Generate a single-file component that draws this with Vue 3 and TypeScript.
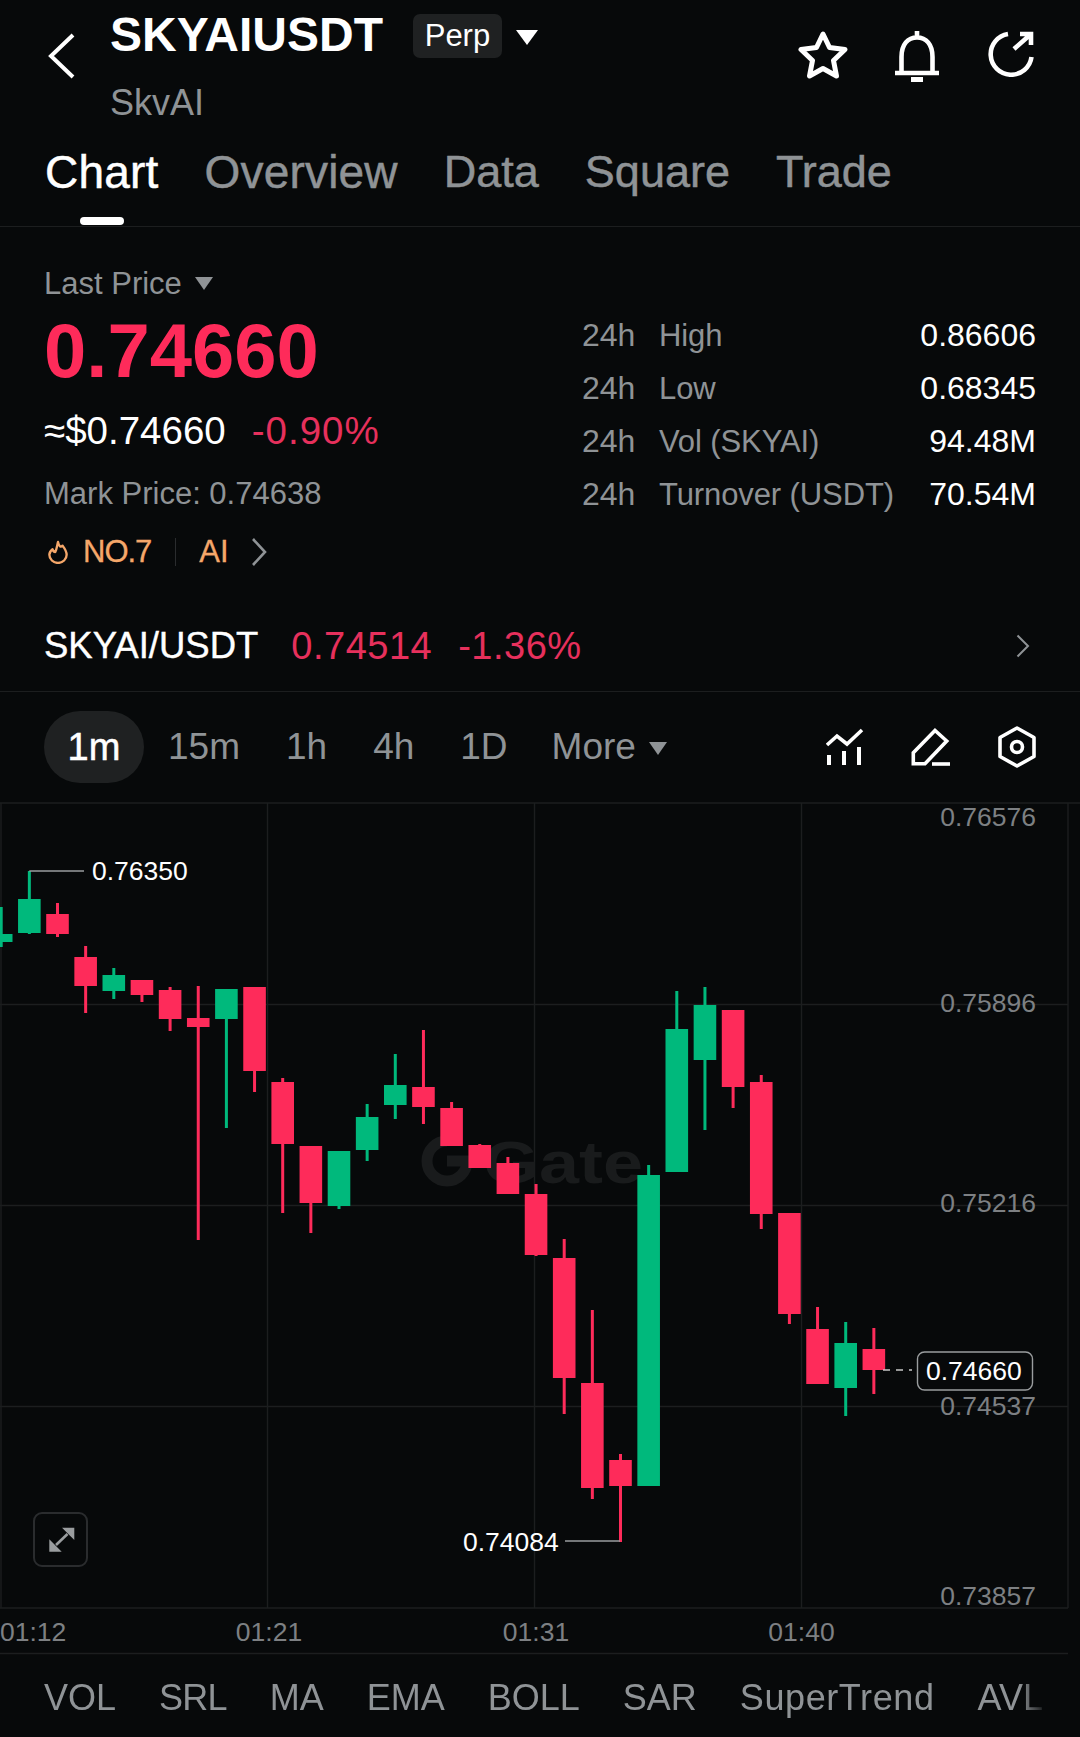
<template>
  <div class="page">
    <header class="top">
      <svg class="back" width="30" height="48" viewBox="0 0 30 48">
        <path d="M26 3 L4 24 L26 45" fill="none" stroke="#fff" stroke-width="4" />
      </svg>
      <div class="title-block">
        <div class="title-row">
          <span class="symbol">SKYAIUSDT</span>
          <span class="perp">Perp</span>
          <span class="tri tri-white"></span>
        </div>
        <div class="subname">SkvAI</div>
      </div>
      <div class="top-icons">
        <svg width="50" height="48" viewBox="0 0 50 48">
          <path d="M25 3 L31.5 16.5 L47 18.5 L35.5 29.5 L38.5 45 L25 37.5 L11.5 45 L14.5 29.5 L3 18.5 L18.5 16.5 Z" fill="none" stroke="#fff" stroke-width="5" stroke-linejoin="round" />
        </svg>
        <svg width="44" height="52" viewBox="0 0 44 52">
          <path d="M22 0 V6 M6.5 41 V26 C6.5 13 13 6.5 22 6.5 C31 6.5 37.5 13 37.5 26 V41 M0 42 H44" fill="none" stroke="#fff" stroke-width="4.6" />
          <rect x="16" y="46" width="12" height="5" fill="#fff" />
        </svg>
        <svg class="refresh" width="46" height="46" viewBox="0 0 46 46">
          <path d="M20 3 A20.5 20.5 0 1 0 43.5 26" fill="none" stroke="#fff" stroke-width="4.6" />
          <path d="M26 18 L43 3 M32 3 H43 V14" fill="none" stroke="#fff" stroke-width="4.6" />
        </svg>
      </div>
    </header>

    <nav class="tabs">
      <span v-for="(t, i) in tabs" :key="t" class="tab" :class="{ active: i === 0 }">{{ t }}</span>
      <i class="tab-bar"></i>
    </nav>

    <section class="info">
      <div class="info-left">
        <div class="last-label">Last Price<span class="tri tri-grey"></span></div>
        <div class="price">0.74660</div>
        <div class="price-sub">
          <span class="usd">≈$0.74660</span>
          <span class="pct">-0.90%</span>
        </div>
        <div class="mark">Mark Price: 0.74638</div>
        <div class="rank">
          <svg width="20" height="24" viewBox="0 0 22 26">
            <path d="M11 2 C12 7 14 8 16 6 C19 10 20.5 13 20.5 16 A9.5 9 0 0 1 1.5 16 C1.5 13.5 3 11.5 5 10 C5.5 12 6.5 13 8 13 C9.5 10 10 6 11 2 Z" fill="none" stroke="#f5a76a" stroke-width="2.6" stroke-linejoin="round" />
          </svg>
          <span class="rank-no">NO.7</span>
          <i class="rank-div"></i>
          <span class="rank-tag">AI</span>
          <svg class="rank-arrow" width="16" height="30" viewBox="0 0 16 30">
            <path d="M2 2 L14 15 L2 28" fill="none" stroke="#8f9396" stroke-width="2.6" />
          </svg>
        </div>
      </div>
      <div class="stats">
        <div v-for="s in stats" :key="s.label" class="stat-row">
          <span class="stat-h">24h</span>
          <span class="stat-label">{{ s.label }}</span>
          <span class="stat-value">{{ s.value }}</span>
        </div>
      </div>
    </section>

    <section class="spot">
      <span class="spot-name">SKYAI/USDT</span>
      <span class="spot-num">0.74514</span>
      <span class="spot-num spot-pct">-1.36%</span>
      <svg class="spot-arrow" width="14" height="24" viewBox="0 0 14 24">
        <path d="M1.5 1.5 L12 12 L1.5 22.5" fill="none" stroke="#8f9396" stroke-width="2" />
      </svg>
    </section>

    <section class="periods">
      <span class="pill">1m</span>
      <span class="period p15">15m</span>
      <span class="period">1h</span>
      <span class="period">4h</span>
      <span class="period p1d">1D</span>
      <span class="period more">More<span class="tri tri-grey"></span></span>
      <div class="tool-icons">
        <svg width="38" height="38" viewBox="0 0 38 38">
          <path d="M1 17 L11 8 L21 16 L36 2" fill="none" stroke="#fff" stroke-width="3.6" />
          <path d="M3 27 V37 M18 23 V37 M33 19 V37" fill="none" stroke="#fff" stroke-width="4" />
        </svg>
        <svg width="40" height="38" viewBox="0 0 40 38">
          <path d="M2.3 35.7 V24.7 L24 2.5 L35.7 13 L14 35.7 Z" fill="none" stroke="#fff" stroke-width="3.6" />
          <path d="M21 36 H39" fill="none" stroke="#fff" stroke-width="3.6" />
        </svg>
        <svg width="38" height="42" viewBox="0 0 38 42">
          <path d="M19 2 L36 11.5 V30.5 L19 40 L2 30.5 V11.5 Z" fill="none" stroke="#fff" stroke-width="3.6" stroke-linejoin="round" />
          <circle cx="19" cy="21" r="5.5" fill="none" stroke="#fff" stroke-width="3.6" />
        </svg>
      </div>
    </section>

    <section class="chart">
      <svg class="plot" width="1080" height="852" viewBox="0 802 1080 852">
        <g stroke="#1c1e1f" stroke-width="1.4">
          <line x1="0" y1="803" x2="1080" y2="803" />
          <line x1="0" y1="1004.5" x2="1068" y2="1004.5" />
          <line x1="0" y1="1205.5" x2="1068" y2="1205.5" />
          <line x1="0" y1="1406.5" x2="1068" y2="1406.5" />
          <line x1="0" y1="1608" x2="1068" y2="1608" />
          <line x1="0" y1="1653.5" x2="1068" y2="1653.5" />
          <line v-for="x in gridX" :key="x" :x1="x" y1="803" :x2="x" y2="1608" />
        </g>
        <g class="wm">
          <path d="M447 1141 A20 20 0 1 0 467 1161 H447" fill="none" stroke="#191b1c" stroke-width="11" />
          <text x="483" y="1183" textLength="160" lengthAdjust="spacingAndGlyphs">Gate</text>
        </g>
        <g v-for="c in candles" :key="c.x" :fill="c.color">
          <rect :x="c.x - 1.5" :y="c.wt" width="3" :height="c.wb - c.wt" />
          <rect :x="c.x - 11.3" :y="c.t" width="22.6" :height="c.b - c.t" />
        </g>
        <path d="M29.3 871 H84" fill="none" stroke="#9a9d9f" stroke-width="1.4" />
        <text class="plot-white" x="92" y="880">0.76350</text>
        <path d="M565 1541 H620" fill="none" stroke="#9a9d9f" stroke-width="1.4" />
        <text class="plot-white" x="463" y="1551">0.74084</text>
        <text v-for="l in axisY" :key="l.v" class="plot-grey" x="1036" text-anchor="end" :y="l.y">{{ l.v }}</text>
        <path d="M883 1370 H912" fill="none" stroke="#c8c8c8" stroke-width="1.4" stroke-dasharray="7 6" />
        <rect x="917.5" y="1352" width="115" height="38" rx="7" fill="#07090a" stroke="#9a9d9f" stroke-width="1.4" />
        <text class="plot-white" x="926" y="1380">0.74660</text>
        <text class="plot-grey" x="0" y="1640.5">01:12</text>
        <text v-for="t in times" :key="t.v" class="plot-grey" text-anchor="middle" :x="t.x" y="1640.5">{{ t.v }}</text>
      </svg>
      <button class="expand">
        <svg width="30" height="30" viewBox="20 20 30 30">
          <path d="M36 22.7 H48.3 V35 Z M23.3 34.3 V46.7 H35.7 Z" fill="#9a9d9f" />
          <path d="M41.5 29 L30 40" fill="none" stroke="#9a9d9f" stroke-width="2.6" />
        </svg>
      </button>
    </section>

    <div class="indicators">
      <span v-for="n in indicators" :key="n">{{ n }}</span>
    </div>
  </div>
</template>

<script setup lang="ts">
const tabs = ['Chart', 'Overview', 'Data', 'Square', 'Trade']

const stats = [
  { label: 'High', value: '0.86606' },
  { label: 'Low', value: '0.68345' },
  { label: 'Vol (SKYAI)', value: '94.48M' },
  { label: 'Turnover (USDT)', value: '70.54M' },
]

const indicators = ['VOL', 'SRL', 'MA', 'EMA', 'BOLL', 'SAR', 'SuperTrend', 'AVL']
const gridX = [1, 267.5, 534.5, 801.5, 1068]

const axisY = [
  { v: '0.76576', y: 825.5 },
  { v: '0.75896', y: 1011.5 },
  { v: '0.75216', y: 1211.5 },
  { v: '0.74537', y: 1414.5 },
  { v: '0.73857', y: 1604.5 },
]

const times = [
  { v: '01:21', x: 269 },
  { v: '01:31', x: 536 },
  { v: '01:40', x: 801.5 },
]

const UP = '#00b97c'
const DOWN = '#fe2b5a'

// body top, body bottom, wick top, wick bottom, green?
const raw: [number, number, number, number, boolean][] = [
  [934, 942, 907, 947, true],
  [899, 933, 871, 934, true],
  [914, 934, 903, 937, false],
  [957, 986, 946, 1013, false],
  [975, 991, 968, 999, true],
  [980, 995, 980, 1002, false],
  [990, 1019, 987, 1031, false],
  [1018, 1027, 986, 1240, false],
  [989, 1019, 989, 1128, true],
  [987, 1071, 987, 1092, false],
  [1082, 1144, 1078, 1213, false],
  [1146, 1203, 1146, 1233, false],
  [1151, 1206, 1151, 1209, true],
  [1117, 1150, 1104, 1161, true],
  [1085, 1105, 1054, 1119, true],
  [1087, 1107, 1030, 1124, false],
  [1108, 1146, 1102, 1146, false],
  [1145, 1168, 1144, 1168, false],
  [1163, 1194, 1157, 1194, false],
  [1194, 1255, 1184, 1256, false],
  [1258, 1378, 1239, 1414, false],
  [1383, 1488, 1310, 1499, false],
  [1460, 1486, 1454, 1542, false],
  [1175, 1486, 1165, 1486, true],
  [1029, 1172, 991, 1172, true],
  [1005, 1060, 987, 1130, true],
  [1010, 1087, 1010, 1108, false],
  [1082, 1214, 1075, 1229, false],
  [1213, 1314, 1213, 1324, false],
  [1329, 1384, 1307, 1384, false],
  [1343, 1388, 1322, 1416, true],
  [1349, 1370, 1328, 1394, false],
]

const candles = raw.map((c, i) => ({
  x: 1.2 + 28.15 * i,
  t: c[0],
  b: c[1],
  wt: c[2],
  wb: c[3],
  color: c[4] ? UP : DOWN,
}))
</script>

<style>
html,
body {
  background: #07090a;
}
</style>

<style scoped>
.page {
  width: 1080px;
  height: 1737px;
  overflow: hidden;
  background: #07090a;
  color: #fff;
  font-family: "Liberation Sans", Arial, sans-serif;
}
.top {
  height: 128px;
  display: flex;
  padding: 0 46px 0 47px;
  position: relative;
}
.back {
  margin-top: 32px;
  margin-right: 33px;
  flex: none;
}
.title-row {
  display: flex;
  align-items: center;
  height: 69px;
}
.symbol {
  font-size: 48px;
  font-weight: 700;
}
.perp {
  margin-left: 30px;
  margin-top: 3px;
  width: 89px;
  height: 44px;
  border-radius: 7px;
  background: #1f2122;
  font-size: 31px;
  line-height: 43px;
  text-align: center;
}
.tri {
  display: inline-block;
  width: 0;
  height: 0;
  border-style: solid;
  border-color: transparent;
  border-bottom-width: 0;
}
.tri-white {
  margin-left: 14px;
  margin-top: 6px;
  border-width: 15px 11.5px 0;
  border-top-color: #fff;
}
.tri-grey {
  margin-left: 13px;
  vertical-align: 4px;
  border-width: 13px 9.5px 0;
  border-top-color: #8f9396;
}
.subname {
  font-size: 36px;
  color: #8f9396;
  margin-top: 12px;
  line-height: 44px;
}
.top-icons {
  margin-left: auto;
  padding-top: 31px;
  display: flex;
  align-items: flex-start;
  gap: 47px;
}
.refresh {
  margin-left: 2px;
}
.tabs {
  position: relative;
  height: 99px;
  display: flex;
  gap: 46px;
  padding-left: 45px;
  border-bottom: 1px solid #1c1e1f;
  box-sizing: border-box;
}
.tab {
  font-size: 46px;
  line-height: 88px;
  height: 88px;
  color: #8f9396;
  letter-spacing: 0.2px;
  -webkit-text-stroke: 0.5px currentColor;
}
.tab:nth-child(n + 3) {
  font-size: 45px;
  letter-spacing: 0;
}
.tab.active {
  color: #fff;
}
.tab-bar {
  position: absolute;
  left: 80px;
  bottom: 1px;
  width: 44px;
  height: 8px;
  border-radius: 4px;
  background: #fff;
}
.info {
  height: 350px;
  display: flex;
  justify-content: space-between;
  padding: 0 44px;
}
.last-label {
  margin-top: 35px;
  font-size: 31px;
  line-height: 44px;
  color: #8f9396;
}
.price {
  font-size: 76px;
  font-weight: 700;
  line-height: 80px;
  color: #fe2b5a;
  margin-top: 5px;
}
.price-sub {
  display: flex;
  gap: 26px;
  margin-top: 14px;
  font-size: 38.5px;
  line-height: 52px;
}
.pct {
  color: #e6305c;
  letter-spacing: 1px;
}
.mark {
  margin-top: 11px;
  font-size: 31px;
  line-height: 52px;
  color: #8f9396;
}
.rank {
  margin-top: 6px;
  display: flex;
  align-items: center;
  height: 52px;
  font-size: 31px;
  color: #f5a76a;
  padding-left: 4px;
  -webkit-text-stroke: 0.3px currentColor;
}
.rank-no {
  margin-left: 15px;
  letter-spacing: -1px;
}
.rank-div {
  width: 1px;
  height: 28px;
  margin: 0 23px 0 24px;
  background: #2a2c2e;
}
.rank-arrow {
  margin-left: 22px;
}
.stats {
  width: 454px;
  padding-top: 82px;
}
.stat-row {
  display: flex;
  align-items: center;
  height: 53px;
  font-size: 32px;
  color: #8f9396;
}
.stat-h {
  width: 77px;
}
.stat-label {
  font-size: 31px;
  letter-spacing: -0.1px;
}
.stat-value {
  margin-left: auto;
  color: #fff;
}
.spot {
  height: 115px;
  display: flex;
  align-items: center;
  padding: 24px 50px 0 44px;
  border-bottom: 1px solid #1c1e1f;
  box-sizing: border-box;
  font-size: 38px;
}
.spot-name {
  font-size: 36.5px;
  margin-right: 33px;
  -webkit-text-stroke: 0.4px currentColor;
}
.spot-num {
  color: #e6305c;
  letter-spacing: 0.5px;
}
.spot-pct {
  margin-left: 26px;
}
.spot-arrow {
  margin-left: auto;
}
.periods {
  height: 110px;
  display: flex;
  align-items: center;
  padding: 0 44px;
  font-size: 37px;
  color: #8f9396;
  box-sizing: border-box;
}
.pill {
  width: 100px;
  height: 72px;
  border-radius: 36px;
  background: #1f2122;
  color: #fff;
  font-size: 38px;
  line-height: 72px;
  text-align: center;
  margin-right: 24px;
  -webkit-text-stroke: 0.5px currentColor;
}
.period {
  margin-right: 46px;
}
.period.p1d {
  margin-right: 44px;
}
.tool-icons {
  margin-left: auto;
  display: flex;
  align-items: center;
  gap: 47px;
}
.chart {
  position: relative;
  height: 852px;
}
.plot {
  display: block;
  overflow: visible;
}
.plot text {
  font-family: "Liberation Sans", Arial, sans-serif;
  font-size: 26.5px;
}
.plot .plot-white {
  fill: #fff;
}
.plot .plot-grey {
  fill: #7d8083;
}
.plot .wm text {
  fill: #191b1c;
  font-size: 60px;
  font-weight: 700;
}
.expand {
  position: absolute;
  left: 33px;
  top: 710px;
  width: 55px;
  height: 55px;
  padding: 0;
  display: flex;
  align-items: center;
  justify-content: center;
  border: 2px solid #2a2c2e;
  border-radius: 9px;
  background: transparent;
}
.indicators {
  height: 83px;
  display: flex;
  align-items: center;
  gap: 43px;
  padding: 4px 0 0 44px;
  box-sizing: border-box;
  font-size: 36px;
  color: #8f9396;
  white-space: nowrap;
  overflow: hidden;
  -webkit-mask-image: linear-gradient(to right, #000 1020px, transparent 1048px);
  mask-image: linear-gradient(to right, #000 1020px, transparent 1048px);
}
.indicators span:nth-child(2) {
  letter-spacing: -0.8px;
}
.indicators span:nth-child(7) {
  letter-spacing: 0.6px;
}
</style>
